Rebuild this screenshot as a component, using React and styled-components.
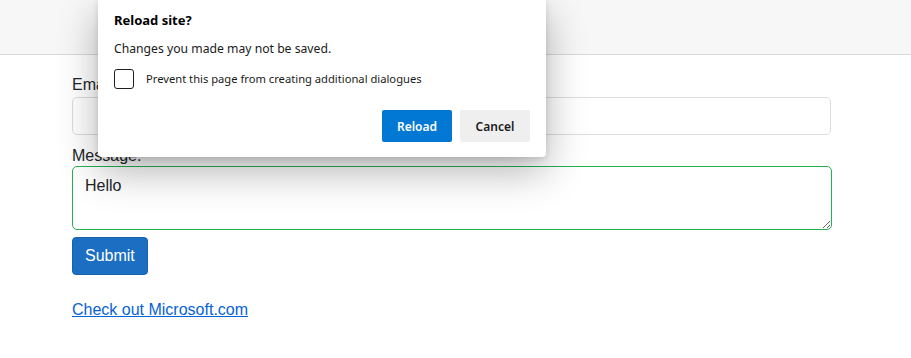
import React from "react";
import styled, { createGlobalStyle } from "styled-components";

const Global = createGlobalStyle`
  html, body { margin: 0; padding: 0; background: #fff; }
  body { font-family: "Liberation Sans", Arial, sans-serif; }
`;

const Page = styled.div`
  position: relative;
  width: 911px;
  height: 358px;
  overflow: hidden;
`;

const TopBar = styled.div`
  height: 54px;
  background: #f7f7f7;
  border-bottom: 1px solid #d9d9d9;
`;

const Content = styled.form`
  width: 759px;
  padding: 21px 0 0 72px;
  display: flex;
  flex-direction: column;
  align-items: flex-start;
`;

const Label = styled.label`
  font-size: 16px;
  line-height: 18px;
  color: #212529;
  margin-bottom: ${(p) => p.$gap}px;
`;

const Input = styled.input`
  box-sizing: border-box;
  width: 759px;
  height: 38px;
  border: 1px solid #dcdcdf;
  border-radius: 5px;
  background: #fff;
  margin-bottom: 12px;
`;

const TextArea = styled.textarea`
  box-sizing: border-box;
  width: 760px;
  height: 64px;
  border: 1px solid #26b050;
  border-radius: 5px;
  padding: 9px 12px;
  font-family: "Liberation Sans", Arial, sans-serif;
  font-size: 16px;
  line-height: 20px;
  color: #212529;
  resize: vertical;
  margin: 0 0 7px;
  outline: none;
`;

const SubmitButton = styled.button`
  box-sizing: border-box;
  height: 38px;
  padding: 0 12px;
  background: #1b6ec2;
  border: 1px solid #1861ac;
  border-radius: 4px;
  color: #fff;
  font-family: "Liberation Sans", Arial, sans-serif;
  font-size: 16px;
  margin-bottom: 26px;
`;

const Link = styled.a`
  font-size: 16px;
  line-height: 18px;
  color: #0563d6;
  text-decoration: underline;
`;

const Dialog = styled.div`
  position: absolute;
  left: 98px;
  top: 0;
  width: 448px;
  box-sizing: border-box;
  padding: 10px 16px 15px;
  background: #fff;
  border-radius: 0 0 4px 4px;
  box-shadow: 0 14px 40px rgba(0, 0, 0, 0.3), 0 2px 6px rgba(0, 0, 0, 0.12);
  font-family: "Noto Sans", "Open Sans", sans-serif;
  color: #1a1a1a;
  display: flex;
  flex-direction: column;
`;

const Title = styled.div`
  font-size: 13px;
  font-weight: 700;
  line-height: 20px;
  color: #000;
  margin-bottom: 10px;
`;

const Message = styled.div`
  font-size: 12.2px;
  line-height: 18px;
  margin-bottom: 11px;
`;

const CheckRow = styled.label`
  display: flex;
  align-items: center;
  gap: 12px;
  font-size: 11.2px;
  line-height: 20px;
  margin-bottom: 21px;
`;

const Box = styled.span`
  box-sizing: border-box;
  width: 20px;
  height: 20px;
  border: 1px solid #1f1f1f;
  border-radius: 3px;
  background: #fff;
`;

const Actions = styled.div`
  display: flex;
  justify-content: flex-end;
  gap: 8px;
`;

const DialogButton = styled.button`
  width: 70px;
  height: 32px;
  border: none;
  border-radius: 2px;
  font-family: "Noto Sans", "Open Sans", sans-serif;
  font-size: 12px;
  font-weight: 600;
  background: ${(p) => (p.$primary ? "#0078d4" : "#efefef")};
  color: ${(p) => (p.$primary ? "#fff" : "#1a1a1a")};
`;

export default function App() {
  return (
    <>
      <Global />
      <Page>
        <TopBar />
        <Content onSubmit={(e) => e.preventDefault()}>
          <Label $gap={3}>Email:</Label>
          <Input type="text" />
          <Label $gap={1}>Message:</Label>
          <TextArea defaultValue="Hello" />
          <SubmitButton type="submit">Submit</SubmitButton>
          <Link href="#">Check out Microsoft.com</Link>
        </Content>
        <Dialog>
          <Title>Reload site?</Title>
          <Message>Changes you made may not be saved.</Message>
          <CheckRow>
            <Box />
            Prevent this page from creating additional dialogues
          </CheckRow>
          <Actions>
            <DialogButton $primary>Reload</DialogButton>
            <DialogButton>Cancel</DialogButton>
          </Actions>
        </Dialog>
      </Page>
    </>
  );
}
